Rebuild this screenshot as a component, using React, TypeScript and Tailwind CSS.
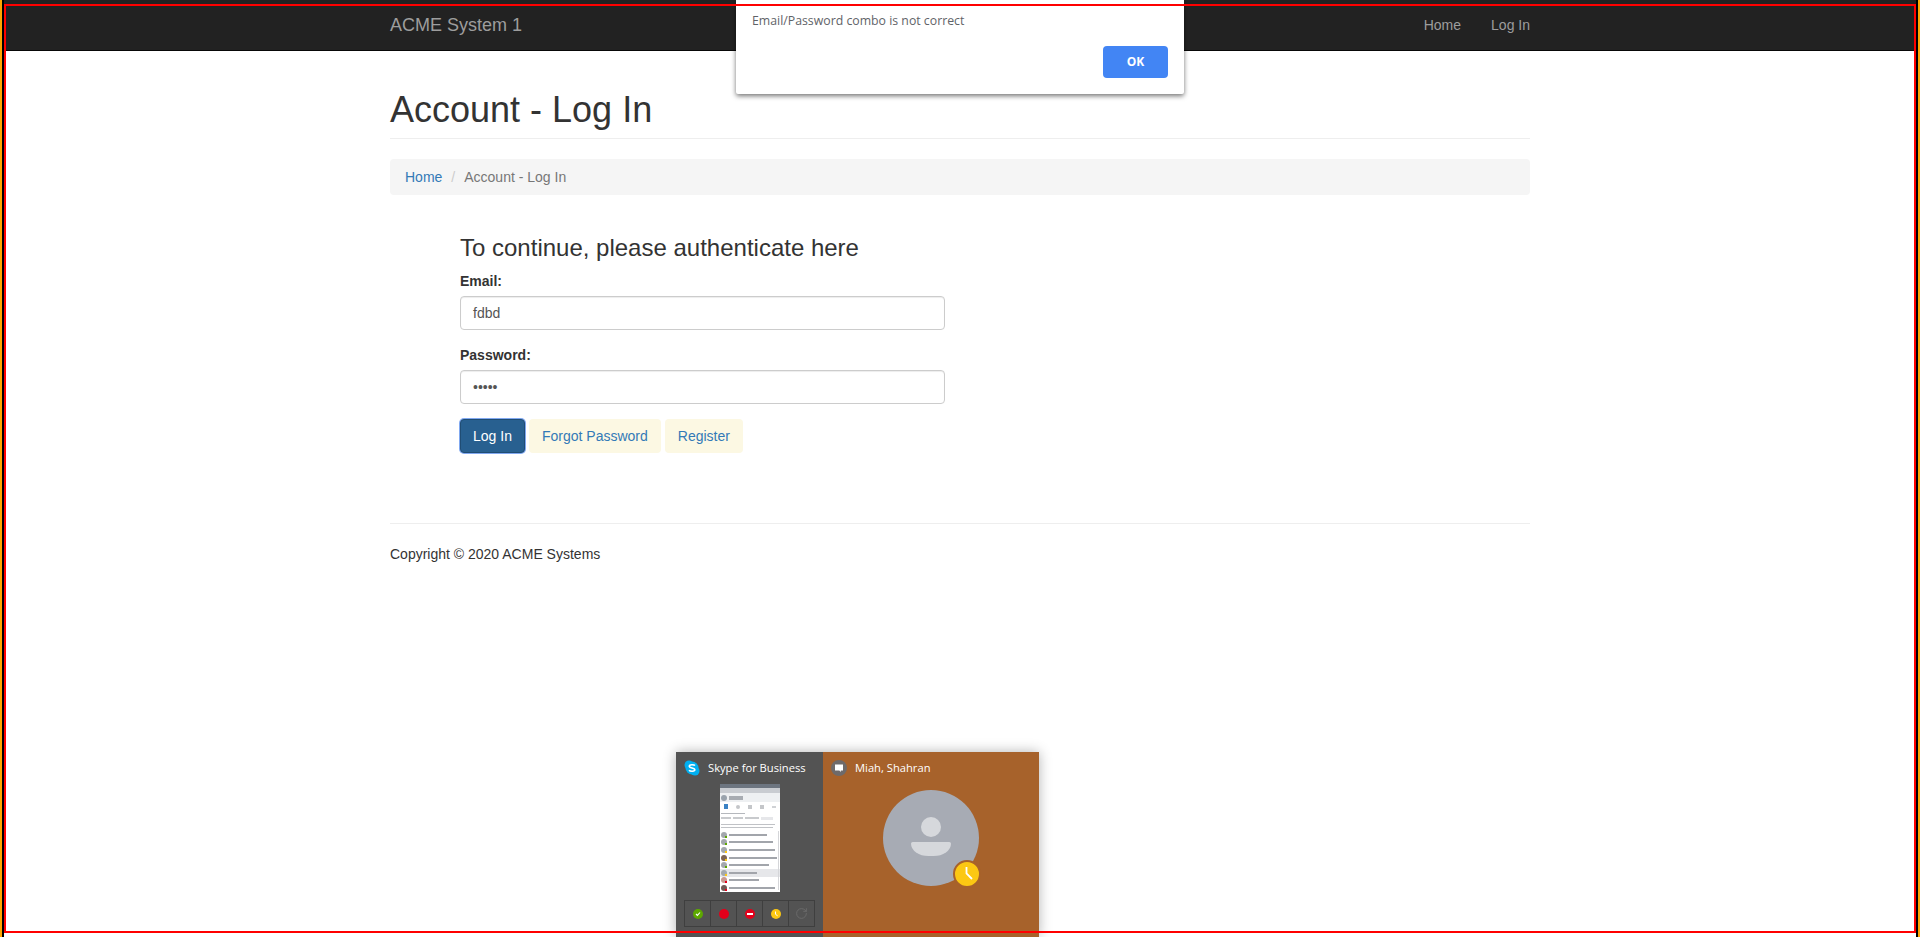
import React from 'react';
import { RotateCw } from 'lucide-react';

const font = 'font-["Liberation_Sans",Arial,sans-serif]';

const contacts = [
  { avatar: '#a3a8ad', status: '#5da800', w1: 38, w2: 10 },
  { avatar: '#a3a8ad', status: '#5da800', w1: 44, w2: 0 },
  { avatar: '#a3a8ad', status: '#fcc813', w1: 46, w2: 4 },
  { avatar: '#7d6553', status: '#fcc813', w1: 48, w2: 0 },
  { avatar: '#a3a8ad', status: '#5da800', w1: 40, w2: 0 },
  { avatar: '#a3a8ad', status: '#fcc813', w1: 28, w2: 0 },
  { avatar: '#c79a92', status: '#e3001b', w1: 30, w2: 0 },
  { avatar: '#6f5a55', status: '#e3001b', w1: 46, w2: 0 },
];

const Thumbnail: React.FC = () => {
  return (
    <div className="relative w-[60px] h-[108px] bg-white overflow-hidden flex flex-col">
      <div className="h-[4px] bg-[#6d7580] shrink-0" />
      <div className="h-[5px] bg-[#c9ccd1] shrink-0" />
      {/* profile */}
      <div className="h-[9px] bg-[#eef0f2] flex items-center gap-[2px] px-[1px] shrink-0">
        <div className="w-[6px] h-[6px] rounded-full bg-[#9aa3ad]" />
        <div className="w-[14px] h-[4px] bg-[#a8acb2]" />
      </div>
      {/* tabs */}
      <div className="h-[9px] flex items-center justify-between px-[4px] shrink-0">
        <div className="w-[4px] h-[5px] bg-[#3b82c4]" />
        <div className="w-[4px] h-[4px] rounded-full bg-[#c4c6c9]" />
        <div className="w-[4px] h-[4px] bg-[#c4c6c9]" />
        <div className="w-[4px] h-[4px] bg-[#c4c6c9]" />
        <div className="w-[4px] h-[2px] bg-[#d0d2d5]" />
      </div>
      <div className="h-[20px] px-[1px] pt-[1px] flex flex-col gap-[2px] shrink-0">
        <div className="w-[24px] h-[1px] mt-[1px] bg-[#b5b8bd]" />
        <div className="flex gap-[2px] mt-[1px]">
          <div className="w-[10px] h-[2px] bg-[#c8cacd]" />
          <div className="w-[10px] h-[2px] bg-[#c8cacd]" />
          <div className="w-[14px] h-[2px] bg-[#c8cacd]" />
          <div className="w-[12px] h-[3px] bg-[#e6e7ea]" />
        </div>
        <div className="w-[54px] h-[1px] mt-[2px] bg-[#c0c2c6]" />
        <div className="w-[52px] h-[1px] bg-[#c0c2c6]" />
      </div>
      {contacts.map((c, i) => (
        <div key={i} className={`relative h-[7.6px] flex items-center gap-[2px] px-[1px] shrink-0 ${i === 5 ? 'bg-[#e6e7ea]' : ''}`}>
          <div className="relative w-[6px] h-[6px] rounded-full shrink-0" style={{ backgroundColor: c.avatar }}>
            <div className="absolute right-0 bottom-0 w-[2px] h-[2px]" style={{ backgroundColor: c.status }} />
          </div>
          <div className="h-[2px] bg-[#a2a5ab]" style={{ width: c.w1 }} />
        </div>
      ))}
      <div className="absolute right-[1px] top-[47px] bottom-[2px] w-[1px] bg-[#d5d6d9]" />
    </div>
  );
};

const Presence: React.FC<{ children?: React.ReactNode }> = ({ children }) => (
  <div className="w-[27px] h-[27px] border border-[#3f3f3f] flex items-center justify-center -ml-px first:ml-0">{children}</div>
);

const App: React.FC = () => {
  return (
    <div className={`relative h-[937px] overflow-hidden bg-white text-[14px] leading-[20px] text-[#333333] ${font}`}>
      {/* navbar */}
      <nav className="h-[51px] bg-[#222222] border-b border-[#080808]">
        <div className="w-[1170px] mx-auto px-[15px] flex justify-between items-center h-[50px]">
          <span className="text-[18px] text-[#9d9d9d]">ACME System 1</span>
          <div className="flex gap-[30px] text-[#9d9d9d]">
            <span>Home</span>
            <span>Log In</span>
          </div>
        </div>
      </nav>

      <main className="w-[1170px] mx-auto px-[15px]">
        <h1 className="text-[36px] leading-[40px] mt-[39px] pb-[8px] border-b border-[#eeeeee] mb-[20px]">Account - Log In</h1>
        <div className="h-[36px] rounded bg-[#f5f5f5] px-[15px] flex items-center mb-[40px]">
          <span className="text-[#337ab7]">Home</span>
          <span className="text-[#cccccc] px-[9px]">/</span>
          <span className="text-[#777777]">Account - Log In</span>
        </div>

        <div className="ml-[70px] w-[485px]">
          <h3 className="text-[24px] leading-[26px] mb-[10px]">To continue, please authenticate here</h3>
          <label className="block font-bold mb-[5px]">Email:</label>
          <div className="h-[34px] rounded border border-[#cccccc] shadow-[inset_0_1px_1px_rgba(0,0,0,0.075)] px-[12px] flex items-center text-[#555555] mb-[15px]">fdbd</div>
          <label className="block font-bold mb-[5px]">Password:</label>
          <div className="h-[34px] rounded border border-[#cccccc] shadow-[inset_0_1px_1px_rgba(0,0,0,0.075)] px-[12px] flex items-center text-[#555555] mb-[15px]">•••••</div>
          <div className="flex gap-[4px]">
            <span className="h-[34px] px-[12px] flex items-center rounded bg-[#286090] border border-[#204d74] text-white shadow-[0_0_0_1px_#80a8f0]">Log In</span>
            <span className="h-[34px] px-[13px] flex items-center rounded bg-[#fcf8e3] text-[#337ab7]">Forgot Password</span>
            <span className="h-[34px] px-[13px] flex items-center rounded bg-[#fcf8e3] text-[#337ab7]">Register</span>
          </div>
        </div>

        <hr className="mt-[70px] mb-[20px] border-[#eeeeee]" />
        <p>Copyright © 2020 ACME Systems</p>
      </main>

      {/* alert dialog */}
      <div className="absolute left-[736px] top-0 w-[448px] h-[94px] bg-white rounded-b-[2px] shadow-[0_2px_5px_rgba(0,0,0,0.55)] font-['Open_Sans',sans-serif] text-[12.3px] text-[#5f6368]">
        <div className="pl-[16px] pt-[11px] leading-[20px]">Email/Password combo is not correct</div>
        <div className="absolute right-[16px] top-[46px] w-[65px] h-[32px] rounded-[4px] bg-[#4285f4] text-[12px] text-white font-bold flex items-center justify-center">OK</div>
      </div>

      {/* taskbar preview */}
      <div className="absolute left-[676px] top-[752px] w-[363px] h-[185px] flex shadow-[0_0_12px_rgba(0,0,0,0.3)] font-['Open_Sans',sans-serif] text-[11.2px] text-white">
        <div className="w-[147px] bg-[#535353] px-[8px] pt-[6px] flex flex-col">
          <div className="flex items-center gap-[8px] h-[20px]">
            <svg width="16" height="16" viewBox="0 0 16 16">
              <circle cx="5" cy="5" r="4.5" fill="#00aff0" />
              <circle cx="11" cy="11" r="4.5" fill="#00aff0" />
              <circle cx="8" cy="8" r="6.5" fill="#00aff0" />
              <path d="M11 5.6C10.2 4.6 5.4 4.2 5.3 6.2c0 2.2 5.5 1.3 5.5 3.6 0 1.8-4.6 1.8-5.8.4" fill="none" stroke="#fff" strokeWidth="1.6" />
            </svg>
            <span>Skype for Business</span>
          </div>
          <div className="flex justify-center mt-[6px]">
            <Thumbnail />
          </div>
          <div className="flex mt-[8px] w-[131px]">
            <Presence>
              <div className="w-[10px] h-[10px] rounded-full bg-[#5da800] flex items-center justify-center">
                <svg width="6" height="6" viewBox="0 0 6 6"><path d="M1 3l1.4 1.4L5 1.5" fill="none" stroke="#fff" strokeWidth="1.1" /></svg>
              </div>
            </Presence>
            <Presence><div className="w-[10px] h-[10px] rounded-full bg-[#e3001b]" /></Presence>
            <Presence>
              <div className="w-[10px] h-[10px] rounded-full bg-[#e3001b] flex items-center justify-center">
                <div className="w-[6px] h-[2px] bg-white" />
              </div>
            </Presence>
            <Presence>
              <div className="w-[10px] h-[10px] rounded-full bg-[#fcc813] flex items-center justify-center">
                <svg width="8" height="8" viewBox="0 0 8 8"><path d="M3.5 1.5V4.3L5.6 5.8" fill="none" stroke="#fff" strokeWidth="1" /></svg>
              </div>
            </Presence>
            <Presence><RotateCw size={13} strokeWidth={1.5} className="text-[#6e6e6e]" /></Presence>
          </div>
        </div>
        <div className="flex-1 bg-[#a7622b] relative">
          <div className="flex items-center gap-[8px] pl-[8px] pt-[6px] h-[26px]">
            <div className="w-[16px] h-[16px] rounded-full bg-[#6e6a6a] flex items-center justify-center">
              <svg width="10" height="10" viewBox="0 0 10 10"><path d="M1 1.5h8v6H6.8v1.6L5.3 7.5H1z" fill="#fff" /></svg>
            </div>
            <span>Miah, Shahran</span>
          </div>
          <div className="absolute left-[60px] top-[38px] w-[96px] h-[96px] rounded-full bg-[#a7abb4] flex flex-col items-center">
            <div className="w-[20px] h-[20px] rounded-full bg-[#d6d8dc] mt-[27px]" />
            <div className="w-[40px] h-[14px] [border-radius:2px_2px_20px_20px/2px_2px_14px_14px] bg-[#d6d8dc] mt-[5px]" />
          </div>
          <div className="absolute left-[130px] top-[108px] w-[24px] h-[24px] rounded-full bg-[#fcc813] border-2 border-[#a7622b] box-content flex items-center justify-center">
            <svg width="24" height="24" viewBox="0 0 24 24"><path d="M11.5 5V11.5L17 17" fill="none" stroke="#fff" strokeWidth="1.8" /></svg>
          </div>
        </div>
      </div>

      {/* annotation frame drawn over the screenshot */}
      <div className="absolute inset-0 pointer-events-none border-x-2 border-[#ffa500]" />
      <div className="absolute left-[2px] right-[2px] top-0 bottom-0 pointer-events-none border-x-2 border-black" />
      <div className="absolute inset-[4px] pointer-events-none border-2 border-[#ff0000]" />
    </div>
  );
};

export default App;
